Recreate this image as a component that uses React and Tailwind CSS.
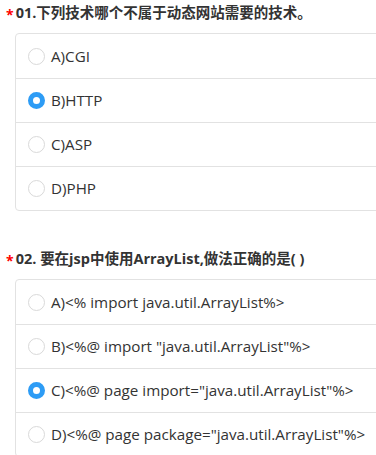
import React from 'react'

const QUESTIONS = [
  {
    no: '01.',
    title: '下列技术哪个不属于动态网站需要的技术。',
    options: ['A)CGI', 'B)HTTP', 'C)ASP', 'D)PHP'],
    checked: 1,
  },
  {
    no: '02. ',
    title: '要在jsp中使用ArrayList,做法正确的是( )',
    options: [
      'A)<% import java.util.ArrayList%>',
      'B)<%@ import "java.util.ArrayList"%>',
      'C)<%@ page import="java.util.ArrayList"%>',
      'D)<%@ page package="java.util.ArrayList"%>',
    ],
    checked: 2,
  },
]

function Radio({ on }) {
  return on ? (
    <span className="w-[17px] h-[17px] rounded-full border-[5px] border-[#2d9cf5] bg-white shrink-0" />
  ) : (
    <span className="w-[17px] h-[17px] rounded-full border border-[#d9d9d9] bg-white shrink-0" />
  )
}

function Question({ q }) {
  return (
    <div>
      <div className="flex items-center h-[26px] pl-[6px] text-[14.5px] font-bold text-[#333]">
        <span className="text-[#f00] text-[14px] mr-[2px] mt-[2px]">*</span>
        <span>{q.no}{q.title}</span>
      </div>
      <div className="ml-[15px] mt-[7px] -mr-[10px] border border-[#e2e2e2] rounded-[4px] bg-white">
        {q.options.map((opt, i) => (
          <div
            key={opt}
            className={`flex items-center h-[44px] pl-[12px] gap-[6px] ${i > 0 ? 'border-t border-[#e2e2e2]' : ''}`}
          >
            <Radio on={i === q.checked} />
            <span className="text-[15.2px] text-[#333] whitespace-nowrap">{opt}</span>
          </div>
        ))}
      </div>
    </div>
  )
}

export default function App() {
  return (
    <div
      className="w-[376px] h-[455px] overflow-hidden bg-white"
      style={{ fontFamily: '"Open Sans", "Noto Sans CJK SC", sans-serif' }}
    >
      <div className="pt-0">
        <Question q={QUESTIONS[0]} />
      </div>
      <div className="mt-[35px]">
        <Question q={QUESTIONS[1]} />
      </div>
    </div>
  )
}
